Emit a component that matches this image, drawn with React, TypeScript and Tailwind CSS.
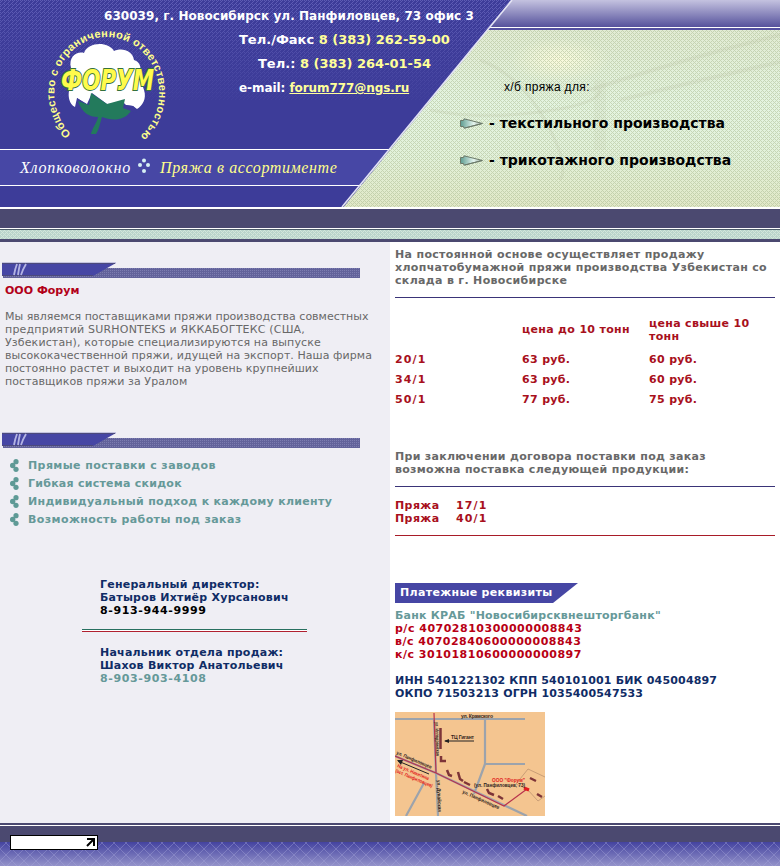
import React from "react";

const verdana = "font-['DejaVu_Sans',sans-serif]";

function Cone() {
  return (
    <svg width="23" height="11" viewBox="0 0 23 11" className="shrink-0">
      <defs>
        <linearGradient id="cone" x1="0" x2="1">
          <stop offset="0" stopColor="#5d9c90" />
          <stop offset="0.6" stopColor="#e4f4ee" />
          <stop offset="1" stopColor="#9aa89c" />
        </linearGradient>
      </defs>
      <path d="M.5 2.500 L3.500 2.500 L4 .8 L22.500 5.500 L4 10.200 L3.500 8.500 L.5 8.500Z" fill="url(#cone)" stroke="#6c7a6a" />
      <path d="M5 10L22 5.500" stroke="#6c7a6a" />
    </svg>
  );
}

function Logo() {
  return (
    <svg width="130" height="125" viewBox="43 22 130 125" className="absolute left-[43px] top-[22px] overflow-visible">
      <path
        d="M71 86 C66 78 70 72 71 68 C68 57 77 51 84 53 C88 42 108 41 114 51 C122 47 133 51 134 60 C141 62 142 70 139 75 L144 90 C147 99 142 106 137 109 L133 106 L126 105 L124 103 L107 104 L92 93 L87 104 L77 98 L75 107 C69 104 68 96 69 91 Z"
        fill="#fff"
      />
      <path d="M125 105L133 106L137 110L136 113L124 109ZM77 98L86 104L82 108L77 104Z" fill="#3d3c99" />
      <path
        d="M78 101 L89 105 L91 93 L107 104 L125 99 L123 108 L131 111 C124 121 112 121 102 117 C100 123 99 130 96 134 L91 134 C92 128 97 123 98 117 C89 117 82 113 78 101Z"
        fill="#237a5c"
      />
      <text
        x="61"
        y="90"
        textLength="93"
        lengthAdjust="spacingAndGlyphs"
        className="font-['DejaVu_Sans',sans-serif] text-[28px] font-bold italic"
        fill="#fffb4c"
        stroke="#35713c"
        strokeWidth="2"
        paintOrder="stroke"
      >
        ФОРУМ
      </text>
      <path id="ring" d="M71 134 A52.500 56 0 1 1 138 138" fill="none" />
      <text className="font-['Liberation_Sans',sans-serif] text-[11px] font-bold" fill="#ffff8c">
        <textPath href="#ring" textLength="264">
          Общество с ограниченной ответственностью
        </textPath>
      </text>
    </svg>
  );
}

function HeaderArt() {
  return (
    <svg width="780" height="209" viewBox="0 0 780 209" className="absolute inset-0">
      <defs>
        <pattern id="weave" width="4" height="4" patternUnits="userSpaceOnUse">
          <path d="M0 0h1v1H0zM2 0h1v1H2zM1 1h1v1H1zM0 2h1v1H0zM3 3h1v1H3z" fill="#7a78cc" />
        </pattern>
        <linearGradient id="fade" x2="0" y2="1">
          <stop offset="0" stopColor="#fff" stopOpacity="0.55" />
          <stop offset="1" stopColor="#fff" stopOpacity="0.08" />
        </linearGradient>
        <mask id="weaveMask">
          <rect width="520" height="100" fill="url(#fade)" />
        </mask>
        <pattern id="net" width="4" height="4" patternUnits="userSpaceOnUse">
          <path d="M0 0h1v1H0zM2 2h1v1H2zM1 1h1v1H1zM3 3h1v1H3zM3 1h1v1H3zM1 3h1v1H1z" fill="#a9ba90" fillOpacity="0.5" />
        </pattern>
        <linearGradient id="mint" x2="0" y2="1">
          <stop offset="0" stopColor="#e0e8ce" />
          <stop offset="0.5" stopColor="#e4f4e0" />
          <stop offset="0.75" stopColor="#e2f1da" />
          <stop offset="1" stopColor="#e1e8c6" />
        </linearGradient>
        <linearGradient id="violet" x2="0" y2="1">
          <stop offset="0" stopColor="#c4c2e0" />
          <stop offset="1" stopColor="#56529c" />
        </linearGradient>
        <radialGradient id="glow">
          <stop offset="0" stopColor="#fafadc" />
          <stop offset="1" stopColor="#fafadc" stopOpacity="0" />
        </radialGradient>
      </defs>
      <rect width="780" height="209" fill="#3d3c99" />
      <rect width="520" height="100" fill="url(#weave)" mask="url(#weaveMask)" />
      <rect y="150" width="400" height="35" fill="#4747a5" />
      <rect y="149" width="400" height="1" fill="#fff" />
      <rect y="185" width="400" height="1" fill="#fff" />
      <path d="M512 0H780V209H342Z" fill="url(#mint)" />
      <ellipse cx="560" cy="60" rx="50" ry="22" fill="url(#glow)" />
      <g fill="none" stroke="#b8bf9e" strokeOpacity="0.18">
        <path d="M480 60 Q520 75 545 120 T560 180" strokeWidth="3" />
        <path d="M590 90 Q680 60 780 35M620 100 Q700 80 780 62" strokeWidth="4" />
        <path d="M430 110 Q480 120 540 112 T600 90" strokeWidth="3" />
        <path d="M600 80 V150" strokeWidth="12" strokeOpacity="0.1" />
      </g>
      <path d="M512 0H780V209H342Z" fill="url(#net)" />
      <path d="M512 0H780V27H490Z" fill="url(#violet)" />
      <path d="M490 27H780V28H489Z" fill="#fff" />
      <path d="M489 28H780V30H487Z" fill="#5450a0" />
      <path d="M512 0L342 207" stroke="#e4e4f4" strokeWidth="1.6" />
      <rect y="207" width="780" height="2" fill="#fff" />
    </svg>
  );
}

function Header() {
  return (
    <header className="relative h-[209px] overflow-hidden">
      <HeaderArt />
      <Logo />
      <div className="relative flex h-full">
        <div className="flex w-[480px] flex-col whitespace-nowrap text-[13px] font-bold leading-6 text-white">
          <div className="h-[149px] pt-1">
            <p className="pl-[104px] text-[12px] leading-6 tracking-[0.05px]">
              630039, г. Новосибирск ул. Панфиловцев, 73 офис 3
            </p>
            <p className="pl-[239px]">
              Тел./Факс <span className="text-[#ffff99]">8 (383) 262-59-00</span>
            </p>
            <p className="pl-[258px]">
              Тел.: <span className="text-[#ffff99]">8 (383) 264-01-54</span>
            </p>
            <p className="pl-[239px] text-[12px] leading-6 tracking-[-0.07px]">
              e-mail: <a className="text-[#ffff99] underline">forum777@ngs.ru</a>
            </p>
          </div>
          <div className="flex h-[37px] items-center pl-5 font-['Liberation_Serif',serif] text-[16px] font-normal italic">
            <span className="w-[118px] tracking-[0.8px]">Хлопковолокно</span>
            <svg width="12" height="16" viewBox="0 0 12 16" fill="#d6f0f4" className="mb-1">
              <circle cx="6" cy="2.500" r="2" />
              <circle cx="2" cy="7" r="2" />
              <circle cx="10" cy="7" r="2" />
              <circle cx="6" cy="13" r="2" />
            </svg>
            <span className="pl-[10px] tracking-[0.6px] text-[#ffff8c]">Пряжа в ассортименте</span>
          </div>
        </div>
        <div className="flex w-[300px] flex-col whitespace-nowrap text-black">
          <p className="pl-6 pt-[79px] font-['Liberation_Sans',sans-serif] text-[12px] leading-4 tracking-[0.35px]">
            х/б пряжа для:
          </p>
          <ul className="-ml-5 mt-[10px] text-[14px] font-bold">
            <li className="flex h-[37px] items-center gap-[6px]">
              <Cone />- текстильного производства
            </li>
            <li className="flex h-[37px] items-center gap-[6px]">
              <Cone />- трикотажного производства
            </li>
          </ul>
        </div>
      </div>
    </header>
  );
}

function SectionBar() {
  return (
    <svg width="360" height="17" viewBox="0 0 360 17" className="block">
      <defs>
        <pattern id="dots" width="2" height="2" patternUnits="userSpaceOnUse">
          <rect width="2" height="2" fill="#62629a" />
          <rect width="1" height="1" fill="#7c7cb0" />
        </pattern>
      </defs>
      <rect x="3" y="6" width="357" height="10" fill="url(#dots)" />
      <path d="M2 1H116L93 14H2Z" fill="#4646a4" />
      <path d="M2 1.500H115M2 13.500H93" stroke="#4c4a7c" />
      <path d="M2 .5H116" stroke="#c4c4e0" />
      <path d="M14 13Q15 7 17 2M18 13Q19 6 20 2M21 13Q23 7 26 2" stroke="#c8c8ee" strokeWidth="1.8" strokeOpacity="0.85" fill="none" />
    </svg>
  );
}

function Advantage({ tracking, children }: { tracking: string; children: string }) {
  return (
    <li className={`flex h-[18px] items-center whitespace-nowrap pl-[10px] ${tracking}`}>
      <svg width="9" height="13" viewBox="0 0 9 13" fill="#5f9a96" className="mr-[9px]">
        <circle cx="6" cy="2.700" r="2.600" />
        <circle cx="2.700" cy="6.500" r="2.700" />
        <circle cx="6" cy="10.300" r="2.600" />
        <path d="M2 5L5 3V10L2 8Z" />
      </svg>
      {children}
    </li>
  );
}

function LeftColumn() {
  return (
    <section className="w-[390px] bg-[#efeef4] text-[11px] leading-[13px]">
      <div className="pt-5">
        <SectionBar />
      </div>
      <h2 className="pl-[5px] pt-[5px] font-bold text-[#b20018]">ООО Форум</h2>
      <p className="whitespace-nowrap pl-[5px] pt-[13px] text-[#686868]">
        Мы являемся поставщиками пряжи производства совместных
        <br />
        <span className="tracking-[0.2px]">предприятий SURHONTEKS и ЯККАБОГТЕКС (США,</span>
        <br />
        <span className="tracking-[0.13px]">Узбекистан), которые специализируются на выпуске</span>
        <br />
        <span className="tracking-[0.06px]">высококачественной пряжи, идущей на экспорт. Наша фирма</span>
        <br />
        <span className="tracking-[0.05px]">постоянно растет и выходит на уровень крупнейших</span>
        <br />
        <span className="tracking-[0.07px]">поставщиков пряжи за Уралом</span>
      </p>
      <div className="pt-11">
        <SectionBar />
      </div>
      <ul className="pt-[7px] font-bold text-[#669999]">
        <Advantage tracking="tracking-[0.4px]">Прямые поставки с заводов</Advantage>
        <Advantage tracking="tracking-[0.25px]">Гибкая система скидок</Advantage>
        <Advantage tracking="tracking-[0.3px]">Индивидуальный подход к каждому клиенту</Advantage>
        <Advantage tracking="tracking-[0.4px]">Возможность работы под заказ</Advantage>
      </ul>
      <div className="whitespace-nowrap pl-[100px] pt-[50px] font-bold tracking-[0.24px] text-[#102c66]">
        <p>Генеральный директор:</p>
        <p>Батыров Ихтиёр Хурсанович</p>
        <p className="tracking-[0.62px] text-black">8-913-944-9999</p>
      </div>
      <div className="ml-[82px] mt-3 w-[225px]">
        <div className="h-px bg-[#287060]" />
        <div className="h-px bg-white" />
        <div className="h-px bg-[#b02030]" />
      </div>
      <div className="whitespace-nowrap pl-[100px] pt-[14px] font-bold tracking-[0.24px] text-[#102c66]">
        <p>Начальник отдела продаж:</p>
        <p>Шахов Виктор Анатольевич</p>
        <p className="tracking-[0.62px] text-[#669999]">8-903-903-4108</p>
      </div>
    </section>
  );
}

const prices = [
  ["20/1", "63 руб.", "60 руб."],
  ["34/1", "63 руб.", "60 руб."],
  ["50/1", "77 руб.", "75 руб."],
];

function StreetMap() {
  return (
    <svg width="150" height="104" viewBox="0 0 150 104" className="mt-3 block bg-[#f4c590]">
      <g fill="none" stroke="#9ca3ac" strokeWidth="2.200">
        <path d="M0 7H130M90 7V52H130M90 52L79 82M39 7L41 61L43 104M29 71L11 104M0 44L41 61L132 104" />
      </g>
      <path d="M39 1L41 61M0 44L41 61L109 94L132 77" fill="none" stroke="#b8324c" strokeWidth="1.200" />
      <path d="M132 77L121 72L133 57L150 65M132 77L143 89L150 84" fill="none" stroke="#b68d6c" strokeWidth="0.700" />
      <g fill="none" stroke="#7d3438" strokeWidth="2.500">
        <path d="M45.500 16V37M46 44V49H51M52 58L54 63L57 64M63 60L65 67L68 69M69 70L75 73M92 77L94 81L99 83M103 84L108 87M135 66L141 69M142 82L147 85" />
      </g>
      <path d="M129 76L134 78" stroke="#e21c20" strokeWidth="3" />
      <path d="M50 29H79M3 49L34 62" stroke="#222" />
      <path d="M49 29L54 27V31ZM2 48L8 48L6 53Z" fill="#222" />
      <g className="font-['Liberation_Sans',sans-serif] text-[5px] font-bold" fill="#30241c">
        <text x="66" y="5.500" textLength="32">ул. Крамского</text>
        <text x="56" y="27" textLength="23">ТЦ Гигант</text>
        <text transform="translate(40 10) rotate(88)" textLength="34" lengthAdjust="spacingAndGlyphs">ул. Ипподромская</text>
        <text transform="translate(42 68) rotate(88)" textLength="32" lengthAdjust="spacingAndGlyphs">ул. Дунайская</text>
        <text transform="translate(1 42) rotate(23)" textLength="38" lengthAdjust="spacingAndGlyphs">ул. Панфиловцев</text>
        <text transform="translate(67 81) rotate(24)" textLength="40" lengthAdjust="spacingAndGlyphs">ул. Панфиловцев</text>
        <text x="79" y="75" textLength="51" lengthAdjust="spacingAndGlyphs">(ул. Панфиловцев, 73)</text>
        <g fill="#e21c20">
          <text x="97" y="70" textLength="33" lengthAdjust="spacingAndGlyphs">ООО "Форум"</text>
          <text transform="translate(2 55) rotate(23)" textLength="34" lengthAdjust="spacingAndGlyphs">На ул. Никитина</text>
          <text transform="translate(0 60) rotate(23)" textLength="40" lengthAdjust="spacingAndGlyphs">(ост. Панфиловцев)</text>
        </g>
      </g>
    </svg>
  );
}

function RightColumn() {
  return (
    <section className="w-[390px] whitespace-nowrap bg-white px-[5px] pt-[6px] text-[11px] font-bold leading-[13px] text-[#686868]">
      <p className="tracking-[0.33px]">
        На постоянной основе осуществляет продажу
        <br />
        хлопчатобумажной пряжи производства Узбекистан со
        <br />
        склада в г. Новосибирске
      </p>
      <div className="mt-[10px] h-px bg-[#3a3478]" />
      <div className="tracking-[0.33px] text-[#a8101c]">
        <div className="grid h-[51px] grid-cols-[127px_127px_126px] items-center pt-3">
          <span />
          <span className="pb-px">цена до 10 тонн</span>
          <span>
            цена свыше 10
            <br />
            тонн
          </span>
        </div>
        {prices.map(([yarn, small, large]) => (
          <div key={yarn} className="grid h-5 grid-cols-[127px_127px_126px] items-center">
            <span className="tracking-[1.1px]">{yarn}</span>
            <span>{small}</span>
            <span>{large}</span>
          </div>
        ))}
      </div>
      <p className="pt-[41px] tracking-[0.3px]">
        При заключении договора поставки под заказ
        <br />
        возможна поставка следующей продукции:
      </p>
      <div className="mt-[10px] h-px bg-[#3a3478]" />
      <div className="grid grid-cols-[61px_1fr] pt-3 tracking-[0.4px] text-[#a8101c]">
        <span>Пряжа</span>
        <span className="tracking-[1.1px]">17/1</span>
        <span>Пряжа</span>
        <span className="tracking-[1.1px]">40/1</span>
      </div>
      <div className="mt-[10px] h-px bg-[#a81c28]" />
      <h2 className="mt-[47px] h-5 w-[183px] bg-[#4646a4] pl-[5px] leading-5 tracking-[0.33px] text-white [clip-path:polygon(0_0,100%_0,158px_100%,0_100%)]">
        Платежные реквизиты
      </h2>
      <p className="pt-[6px] tracking-[0.22px] text-[#669999]">Банк КРАБ "Новосибирсквнешторгбанк"</p>
      <div className="tracking-[0.5px] text-[#b80014]">
        <p>р/с 40702810300000008843</p>
        <p>в/с 40702840600000008843</p>
        <p>к/с 30101810600000000897</p>
      </div>
      <div className="pt-[13px] tracking-[0.17px] text-[#102c66]">
        <p>ИНН 5401221302 КПП 540101001 БИК 045004897</p>
        <p>ОКПО 71503213 ОГРН 1035400547533</p>
      </div>
      <StreetMap />
    </section>
  );
}

function Footer() {
  return (
    <footer className="relative h-[43px] bg-[#4b4970]">
      <svg width="780" height="43" viewBox="0 0 780 43" className="absolute inset-0">
        <defs>
          <linearGradient id="dusk" x2="0" y2="1">
            <stop offset="0" stopColor="#4443a0" />
            <stop offset="1" stopColor="#9493ca" />
          </linearGradient>
          <pattern id="lattice" y="2" width="12" height="12" patternUnits="userSpaceOnUse">
            <path d="M0 0L12 12M12 0L0 12" stroke="#a8a8da" strokeWidth="0.700" strokeOpacity="0.550" />
          </pattern>
        </defs>
        <rect y="2" width="780" height="1" fill="#fff" />
        <rect y="19" width="780" height="24" fill="url(#dusk)" />
        <rect y="19" width="780" height="24" fill="url(#lattice)" />
      </svg>
      <div className="relative pl-[10px] pt-3">
        <div className="flex h-[15px] w-[88px] items-center justify-end border border-black bg-white pr-[2px]">
          <svg width="9" height="9" viewBox="0 0 9 9" stroke="#000" strokeWidth="2" fill="none">
            <path d="M1 1H8V8M8 1L1 8" />
          </svg>
        </div>
      </div>
    </footer>
  );
}

export default function App() {
  return (
    <div className={`h-[866px] w-[780px] overflow-hidden bg-white ${verdana}`}>
      <Header />
      <div className="h-[19px] bg-[#4b4970]" />
      <div className="mt-px h-px bg-[#4c5c68]" />
      <div className="h-[9px] bg-[#bad4cb]">
        <svg width="780" height="9" className="block">
          <defs>
            <pattern id="mesh" width="4" height="4" patternUnits="userSpaceOnUse">
              <path d="M0 0h1v1H0zM2 2h1v1H2zM1 1h1v1H1zM3 3h1v1H3zM3 1h1v1H3zM1 3h1v1H1z" fill="#d2e6da" />
            </pattern>
          </defs>
          <rect width="780" height="9" fill="url(#mesh)" />
        </svg>
      </div>
      <div className="h-[3px] bg-[#4b4970]" />
      <main className="flex h-[581px]">
        <LeftColumn />
        <RightColumn />
      </main>
      <Footer />
    </div>
  );
}
